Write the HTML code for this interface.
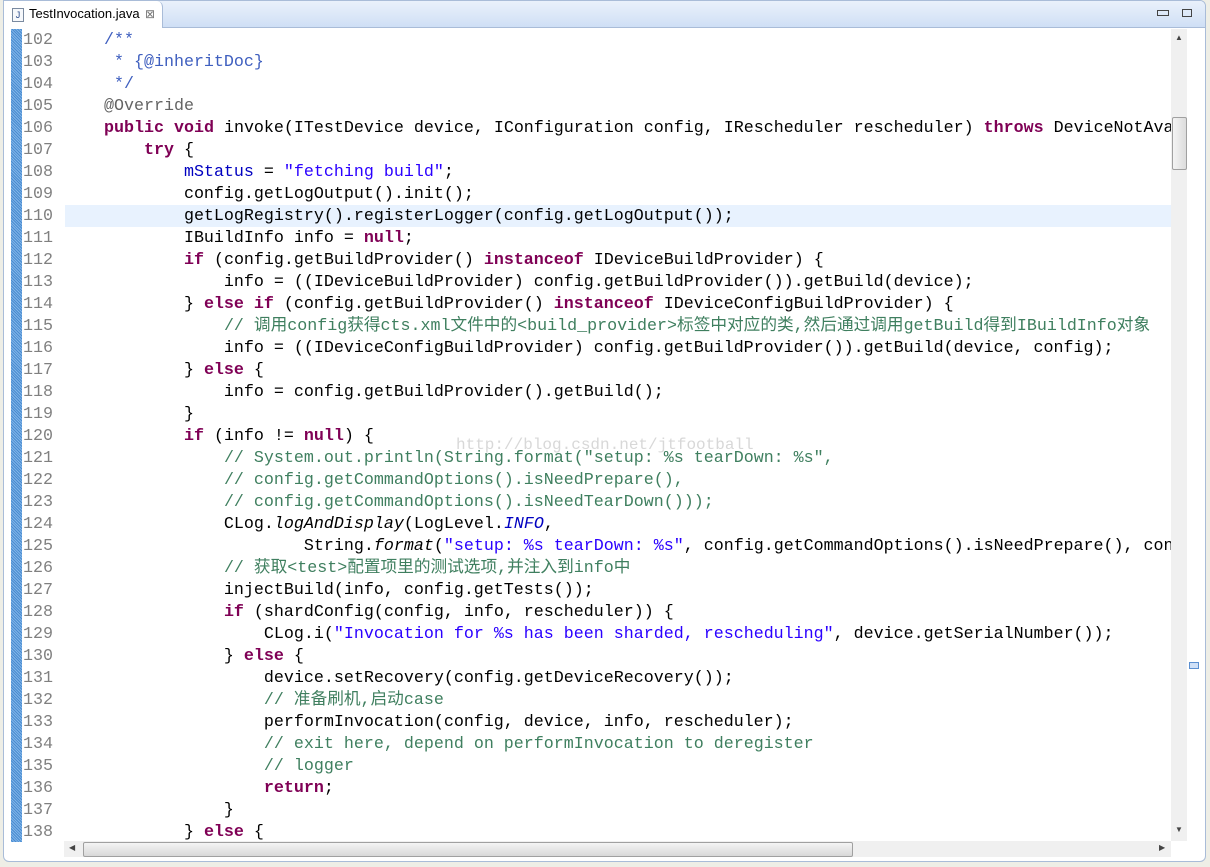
<!DOCTYPE html>
<html><head><meta charset="utf-8"><style>
body{margin:0;width:1210px;height:867px;background:#eeeee6;position:relative;overflow:hidden;font-family:"Liberation Sans",sans-serif}
.win{position:absolute;left:3px;top:0;width:1203px;height:862px;background:#fff;border:1px solid #a9bcd8;border-radius:0 6px 6px 6px;box-sizing:border-box;overflow:hidden}
.bar{position:absolute;left:0;top:0;right:0;height:26px;background:linear-gradient(#eaf1fb,#cfdff5);border-bottom:1px solid #a9bcd8}
.tab{position:absolute;left:0;top:0;width:158px;height:27px;background:#fff;border-right:1px solid #a9bcd8;border-radius:0 6px 0 0;font-size:13px;line-height:26px}
.ruler{position:absolute;left:7px;top:28px;width:11px;height:813px;background:#5b9bd8;background-image:repeating-linear-gradient(45deg,#7fb3e8 0 1px,#4a8cd0 1px 2px)}
.nums,.code{position:absolute;top:29px;margin:0;font-family:"Liberation Mono","Noto Sans CJK SC",monospace;font-size:16.67px;line-height:22px;white-space:pre}
.nums{left:19px;color:#808080}
.code{left:60px;color:#000}
.hl{position:absolute;left:61px;top:204px;width:1107px;height:22px;background:#e8f2fe}
.k{color:#7f0055;font-weight:bold}.s{color:#2a00ff}.c{color:#3f7f5f}.j{color:#3f5fbf}.a{color:#646464}.f{color:#0000c0;font-style:italic}.i{font-style:italic}
.vs{position:absolute;left:1167px;top:28px;width:16px;height:812px;background:#f0f0f0}
.hs{position:absolute;left:60px;top:840px;width:1107px;height:16px;background:#f0f0f0}
</style></head><body>
<div class="win">
<div class="bar"></div>
<div class="tab"><span style="position:absolute;left:8px;top:7px;width:10px;height:12px;border:1px solid #7a8aa0;background:#f6f8fb;font-size:9px;line-height:12px;text-align:center;color:#2a4a8a">J</span><span style="position:absolute;left:25px">TestInvocation.java</span><span style="position:absolute;left:141px;color:#777;font-size:12px">⊠</span></div>
<div style="position:absolute;left:1153px;top:9px;width:10px;height:4px;border:1px solid #444"></div>
<div style="position:absolute;left:1178px;top:8px;width:8px;height:6px;border:1px solid #444"></div>
<div class="ruler"></div>
<div class="hl"></div>
<pre class="nums">102
103
104
105
106
107
108
109
110
111
112
113
114
115
116
117
118
119
120
121
122
123
124
125
126
127
128
129
130
131
132
133
134
135
136
137
138</pre>
<pre class="code">    <span class="j">/**</span>
<span class="j">     * {@inheritDoc}</span>
<span class="j">     */</span>
    <span class="a">@Override</span>
    <span class="k">public</span> <span class="k">void</span> invoke(ITestDevice device, IConfiguration config, IRescheduler rescheduler) <span class="k">throws</span> DeviceNotAva
        <span class="k">try</span> {
            <span class="f" style="font-style:normal">mStatus</span> = <span class="s">"fetching build"</span>;
            config.getLogOutput().init();
            getLogRegistry().registerLogger(config.getLogOutput());
            IBuildInfo info = <span class="k">null</span>;
            <span class="k">if</span> (config.getBuildProvider() <span class="k">instanceof</span> IDeviceBuildProvider) {
                info = ((IDeviceBuildProvider) config.getBuildProvider()).getBuild(device);
            } <span class="k">else</span> <span class="k">if</span> (config.getBuildProvider() <span class="k">instanceof</span> IDeviceConfigBuildProvider) {
                <span class="c">// 调用config获得cts.xml文件中的&lt;build_provider&gt;标签中对应的类,然后通过调用getBuild得到IBuildInfo对象</span>
                info = ((IDeviceConfigBuildProvider) config.getBuildProvider()).getBuild(device, config);
            } <span class="k">else</span> {
                info = config.getBuildProvider().getBuild();
            }
            <span class="k">if</span> (info != <span class="k">null</span>) {
                <span class="c">// System.out.println(String.format("setup: %s tearDown: %s",</span>
                <span class="c">// config.getCommandOptions().isNeedPrepare(),</span>
                <span class="c">// config.getCommandOptions().isNeedTearDown()));</span>
                CLog.<span class="i">logAndDisplay</span>(LogLevel.<span class="f">INFO</span>,
                        String.<span class="i">format</span>(<span class="s">"setup: %s tearDown: %s"</span>, config.getCommandOptions().isNeedPrepare(), con
                <span class="c">// 获取&lt;test&gt;配置项里的测试选项,并注入到info中</span>
                injectBuild(info, config.getTests());
                <span class="k">if</span> (shardConfig(config, info, rescheduler)) {
                    CLog.i(<span class="s">"Invocation for %s has been sharded, rescheduling"</span>, device.getSerialNumber());
                } <span class="k">else</span> {
                    device.setRecovery(config.getDeviceRecovery());
                    <span class="c">// 准备刷机,启动case</span>
                    performInvocation(config, device, info, rescheduler);
                    <span class="c">// exit here, depend on performInvocation to deregister</span>
                    <span class="c">// logger</span>
                    <span class="k">return</span>;
                }
            } <span class="k">else</span> {</pre>
<div style="position:absolute;left:452px;top:435px;color:#d8d8d8;font-family:'Liberation Mono',monospace;font-size:16px">http://blog.csdn.net/jtfootball</div>
<div class="vs"><div style="position:absolute;left:1px;top:88px;width:13px;height:51px;background:linear-gradient(90deg,#f4f4f4,#dcdcdc);border:1px solid #a0a0a0;border-radius:2px"></div><div style="position:absolute;left:4px;top:4px;font-size:8px;color:#444">▲</div><div style="position:absolute;left:4px;top:796px;font-size:8px;color:#444">▼</div></div>
<div class="hs"><div style="position:absolute;left:19px;top:1px;width:768px;height:13px;background:linear-gradient(#f4f4f4,#d8d8d8);border:1px solid #a0a0a0;border-radius:2px"></div><div style="position:absolute;left:5px;top:2px;font-size:8px;color:#444">◀</div><div style="position:absolute;left:1095px;top:2px;font-size:8px;color:#444">▶</div></div>
<div style="position:absolute;left:1185px;top:661px;width:8px;height:5px;border:1px solid #5b8fd0;background:#cfe0f7"></div>
</div>
</body></html>
